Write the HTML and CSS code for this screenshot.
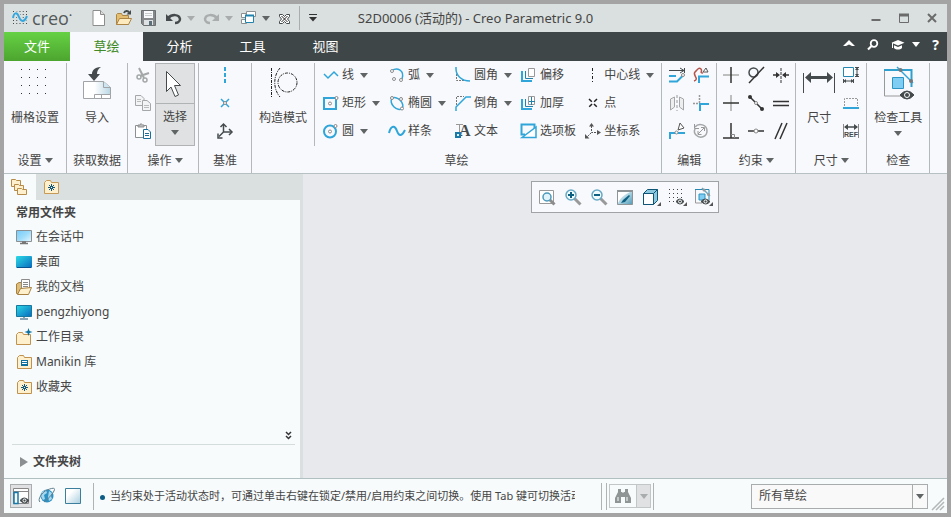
FILE: index.html
```html
<!DOCTYPE html>
<html lang="zh-CN">
<head>
  <meta charset="UTF-8">
  <meta name="viewport" content="width=device-width, initial-scale=1.0">
  <title>S2D0006 (活动的) - Creo Parametric 9.0</title>
  <link rel="stylesheet" href="styles.css">
</head>
<body>
  <div class="window">

    <!-- Title bar -->
    <header class="titlebar">
      <div class="quick">
        <div class="logo">
          <svg width="16" height="16" viewBox="0 0 16 16"><path d="M1 1.500h14M1 4.500h14M1 7.500h14M1 10.500h14M1 13.500h14" stroke="#454b4d" stroke-dasharray="1 2.250" fill="none"/><path d="M1 8C2 2 5 2 7 7s5 6 8-1" stroke="#dae0df" stroke-width="4" fill="none"/><path d="M1 8C2 2 5 2 7 7s5 6 8-1" stroke="#35a7de" stroke-width="2" fill="none"/></svg>
          <span>creo<sup>•</sup></span>
        </div>
        <button class="qbtn" aria-label="新建"><svg width="16" height="18" viewBox="0 0 16 18"><path d="M2 1.500h7.500l4 4v11H2z" fill="#fff" stroke="#8c8c8c"/><path d="M9.500 1.500v4h4" fill="#ddd" stroke="#8c8c8c"/></svg></button>
        <button class="qbtn" aria-label="打开"><svg width="18" height="18" viewBox="0 0 18 18"><path d="M1.500 15.500v-10l1-1h4l1 2h6v9z" fill="#e3bd72" stroke="#ad8443"/><path d="M1.500 15.500l3-6h12l-3 6z" fill="#fdeabf" stroke="#ad8443"/><path d="M9 4c1-2.500 4-2.500 5-.5" stroke="#454b4d" stroke-width="2" fill="none"/><path d="M11.500 5.500h4.500V1z" fill="#454b4d"/></svg></button>
        <button class="qbtn" aria-label="保存"><svg width="16" height="18" viewBox="0 0 16 18"><path d="M.5 1.500h14v15H2.500l-2-2z" fill="#85898b" stroke="#6c7072"/><path d="M3 2h9v7H3z" fill="#f8fafb"/><path d="M4 4.500h7M4 6.500h7" stroke="#c9cccd"/><path d="M3 11h9v5H3z" fill="#dfe2e3"/><path d="M8 12h3v4H8z" fill="#5b6f7b"/></svg></button>
        <button class="qbtn split" aria-label="撤消"><svg width="17" height="16" viewBox="0 0 17 16"><path d="M3 8c4-4 11-4 12 1 0 3-3 4-5 4" stroke="#454b4d" stroke-width="2.500" fill="none"/><path d="M1 4v7h7z" fill="#454b4d"/></svg><i class="caret dim"></i></button>
        <button class="qbtn split" aria-label="重做"><svg width="17" height="16" viewBox="0 0 17 16"><path d="M14 8C10 4 3 4 2 9c0 3 3 4 5 4" stroke="#a9adad" stroke-width="2.500" fill="none"/><path d="M16 4v7H9z" fill="#a9adad"/></svg><i class="caret dim"></i></button>
        <button class="qbtn split" aria-label="窗口"><svg width="16" height="16" viewBox="0 0 16 16"><g fill="#fff" stroke="#8b9091"><path d="M5.500 1.500h9v5h-9zM.5 3.500h5v4h-5zM.5 9.500h5v4h-5z"/></g><path d="M4.500 5.500h8v7h-8z" fill="#fff" stroke="#1f83ad"/><path d="M4 5.500h9" stroke="#1f83ad" stroke-width="2"/></svg><i class="caret"></i></button>
        <button class="qbtn" aria-label="关闭"><svg width="13" height="13" viewBox="0 0 13 13"><path d="M1.500 2.500h3l2 2 2-2h3v2l-2 2.500 2 2.500v2h-3l-2-2-2 2h-3v-2l2-2.500-2-2.500z" fill="#fff" stroke="#454b4d"/><path d="M3.500 4l6 6M9.500 4l-6 6" stroke="#222"/></svg></button>
        <span class="qsep"></span>
        <button class="qbtn more" aria-label="自定义快速访问工具栏"><svg width="10" height="8" viewBox="0 0 10 8"><path d="M1 .5h8" stroke="#333"/><path d="M1 3h8L5 7.500z" fill="#333"/></svg></button>
      </div>
      <h1 class="title">S2D0006 (活动的) - Creo Parametric 9.0</h1>
      <div class="controls">
        <button aria-label="最小化"><svg width="10" height="10" viewBox="0 0 10 10"><path d="M.5 7h9" stroke="#6b6b6b" stroke-width="2"/></svg></button>
        <button aria-label="最大化"><svg width="10" height="10" viewBox="0 0 10 10"><path d="M.5 1v8.500h9V1" stroke="#6b6b6b" fill="none"/><path d="M0 2h10" stroke="#6b6b6b" stroke-width="3"/></svg></button>
        <button aria-label="关闭窗口"><svg width="10" height="10" viewBox="0 0 10 10"><path d="M1 1l8 8M9 1L1 9" stroke="#6b6b6b" stroke-width="2"/></svg></button>
      </div>
    </header>

    <!-- Menu tabs -->
    <nav class="menubar">
      <a class="tab file" href="#">文件</a>
      <a class="tab active" href="#">草绘</a>
      <a class="tab" href="#">分析</a>
      <a class="tab" href="#">工具</a>
      <a class="tab" href="#">视图</a>
      <div class="help">
        <button aria-label="最小化功能区"><svg width="12" height="12" viewBox="0 0 12 12"><path d="M0 7l6-6 6 6H9L6 5.500 3 7z" fill="#fff"/></svg></button>
        <button aria-label="搜索"><svg width="12" height="12" viewBox="0 0 12 12"><circle cx="7" cy="4.500" r="3.300" stroke="#fff" stroke-width="1.800" fill="none"/><path d="M4.500 7L1 10.500" stroke="#fff" stroke-width="2.200"/></svg></button>
        <button class="learn" aria-label="学习"><svg width="14" height="12" viewBox="0 0 14 12"><path d="M7 1l6.500 2.800L7 6.500.5 3.800z" fill="#fff"/><path d="M3 6.200l4 1.700 4-1.700V9c-2 2-6 2-8 0z" fill="#fff"/><path d="M1.500 4v5" stroke="#fff"/></svg><i class="caret white"></i></button>
        <button class="question" aria-label="帮助">?</button>
      </div>
    </nav>

    <!-- Ribbon -->
    <section class="ribbon">
      <div class="group">
        <div class="tools">
          <button class="big"><svg width="32" height="32" viewBox="0 0 32 32"><path d="M2 2.500h26M2 10.500h26M2 18.500h26M2 26.500h26" stroke="#333" stroke-dasharray="1 7" fill="none"/></svg><span>栅格设置</span></button>
        </div>
        <button class="caption">设置<i class="caret"></i></button>
      </div>

      <div class="group narrow">
        <div class="tools">
          <button class="big"><svg width="32" height="32" viewBox="0 0 32 32"><defs><linearGradient id="sheet"><stop offset=".4" stop-color="#fff"/><stop offset="1" stop-color="#b9d7e4"/></linearGradient></defs><path d="M2.500 14.500h20l7 6v11h-27z" fill="url(#sheet)" stroke="#a0a4a6"/><path d="M22.500 14.500v6h7" fill="#cfe5ef" stroke="#a0a4a6"/><path d="M13.500 31.500v-4h16v4zM20.500 27.500v4" fill="#fff" stroke="#a0a4a6"/><path d="M20 0c-7 0-9 4-9 7H7l6 7 6-7h-3c0-3 1-5 4-7z" fill="#454b4d"/></svg><span>导入</span></button>
        </div>
        <div class="caption">获取数据</div>
      </div>

      <div class="group operate">
        <div class="tools">
          <div class="icons one">
            <button aria-label="剪切"><svg width="16" height="16" viewBox="0 0 16 16"><path d="M4 1l5 10M14 6L5 9" stroke="#a3a7a8" stroke-width="2" fill="none"/><circle cx="4" cy="10" r="2" fill="none" stroke="#a3a7a8" stroke-width="1.500"/><circle cx="10" cy="13" r="2" fill="none" stroke="#a3a7a8" stroke-width="1.500"/></svg></button>
            <button aria-label="复制"><svg width="16" height="16" viewBox="0 0 16 16"><g fill="#f3f4f5" stroke="#a3a7a8"><path d="M.5.500H6l3 3v7H.5z"/><path d="M2 4.500h4M2 6.500h4" stroke="#bbb"/><path d="M7.500 5.500H12l3.500 3v7h-8z"/><path d="M9 10.500h5M9 12.500h5" stroke="#bbb"/></g></svg></button>
            <button aria-label="粘贴"><svg width="16" height="16" viewBox="0 0 16 16"><path d="M.5 2.500h11v12H.5z" fill="#fff" stroke="#8c9091"/><path d="M3 4V2h2l1-1.500L7.500 2H9v2z" fill="#bbb" stroke="#8c9091"/><path d="M8.500 6.500H13l2.500 2.500v6.500h-7z" fill="#fff" stroke="#1a6f98"/><path d="M10 10.500h4M10 12.500h4" stroke="#1a6f98"/></svg></button>
          </div>
          <button class="select">
            <span class="pointer"><svg width="18" height="28" viewBox="0 0 18 28"><path d="M.5 1.500v20L5 17l4 9.500 3.500-1.500-4-9.500h6z" fill="#fff" stroke="#454b4d"/></svg></span>
            <span class="name">选择<i class="caret"></i></span>
          </button>
        </div>
        <button class="caption">操作<i class="caret"></i></button>
      </div>

      <div class="group datum">
        <div class="tools">
          <div class="icons one">
            <button aria-label="中心线"><svg width="16" height="16" viewBox="0 0 16 16"><path d="M8 0v16" stroke="#2fa5d9" stroke-width="2" stroke-dasharray="4 2"/></svg></button>
            <button aria-label="点"><svg width="16" height="16" viewBox="0 0 16 16"><path d="M4 4l8 8M12 4l-8 8" stroke="#2fa5d9" stroke-width="1.500"/><circle cx="8" cy="8" r="1.500" fill="#fff" stroke="#888"/></svg></button>
            <button aria-label="坐标系"><svg width="16" height="16" viewBox="0 0 16 16"><path d="M6.500 2v7H14M6.500 9L2 13.500" stroke="#454b4d" stroke-width="1.500" fill="none"/><path d="M3.500 4l3-3 3 3M12 6l3 3-3 3M1 10.500V15h4.500" fill="none" stroke="#454b4d" stroke-width="1.500"/></svg></button>
          </div>
        </div>
        <div class="caption">基准</div>
      </div>

      <div class="group">
        <div class="tools">
          <div class="construct">
            <button class="big"><svg width="32" height="32" viewBox="0 0 32 32"><g stroke="#222" fill="none" stroke-dasharray="3 1 1 1"><path d="M4.500 1v29"/><path d="M13 1c-7 8-7 21 0 29"/><circle cx="20.500" cy="15.500" r="9.500"/></g></svg><span>构造模式</span></button>
          </div>
          <div class="shapes">
            <button class="tool"><svg width="16" height="16" viewBox="0 0 16 16"><path d="M1 7l4 4 6-6 4 4" stroke="#2fa5d9" stroke-width="1.500" fill="none"/></svg>线<i class="caret"></i></button>
            <button class="tool"><svg width="16" height="16" viewBox="0 0 16 16"><path d="M3 3.500C8 0 16 3 13 12" stroke="#2fa5d9" stroke-width="1.500" fill="none"/><g fill="#fff" stroke="#8c9091"><circle cx="3" cy="4" r="1.500"/><circle cx="12" cy="13" r="1.500"/><circle cx="5" cy="12" r="1.500"/></g></svg>弧<i class="caret"></i></button>
            <button class="tool"><svg width="16" height="16" viewBox="0 0 16 16"><path d="M1.500 7v6.500H9" stroke="#777" stroke-dasharray="2 1" fill="none"/><path d="M1 0v2c0 6 5 12 14 12" stroke="#2fa5d9" stroke-width="1.500" fill="none"/></svg>圆角<i class="caret"></i></button>
            <button class="tool"><svg width="16" height="16" viewBox="0 0 16 16"><path d="M7.500 1.500h6v8h-6z" stroke="#999" fill="#fff"/><path d="M4.500 4v7.500H12" stroke="#1f83ad" fill="none"/><path d="M1 4v10h10" stroke="#2fa5d9" stroke-width="2" fill="none"/></svg>偏移</button>
            <button class="tool"><svg width="16" height="16" viewBox="0 0 16 16"><path d="M7.500 1v15" stroke="#222" stroke-dasharray="3 2 1 2"/></svg>中心线<i class="caret"></i></button>

            <button class="tool"><svg width="16" height="16" viewBox="0 0 16 16"><path d="M1 3h12v11H1z" stroke="#2fa5d9" stroke-width="2" fill="none"/><circle cx="7" cy="8.500" r="1.500" fill="#fff" stroke="#888"/><circle cx="13.500" cy="3" r="1.500" fill="#fff" stroke="#888"/></svg>矩形<i class="caret"></i></button>
            <button class="tool"><svg width="16" height="16" viewBox="0 0 16 16"><ellipse cx="8" cy="8.500" rx="7" ry="4.500" transform="rotate(45 8 8.500)" stroke="#2fa5d9" stroke-width="1.500" fill="none"/><g fill="#fff" stroke="#888"><circle cx="3" cy="3" r="1.500"/><circle cx="12" cy="4" r="1.500"/><circle cx="13" cy="13.500" r="1.500"/></g></svg>椭圆<i class="caret"></i></button>
            <button class="tool"><svg width="16" height="16" viewBox="0 0 16 16"><path d="M1.500 10V1.500H9" stroke="#777" stroke-dasharray="2 1" fill="none"/><path d="M1 16v-4L11 2h5" stroke="#2fa5d9" stroke-width="1.500" fill="none"/></svg>倒角<i class="caret"></i></button>
            <button class="tool"><svg width="16" height="16" viewBox="0 0 16 16"><path d="M7.500 1.500h6v8h-6z" stroke="#999" fill="#fff"/><path d="M4.500 4v7.500H12M8 6.500h6M10.500 2v8" stroke="#1f83ad" fill="none"/><path d="M1 4v10h10" stroke="#2fa5d9" stroke-width="2" fill="none"/></svg>加厚</button>
            <button class="tool"><svg width="16" height="16" viewBox="0 0 16 16"><path d="M4 4l8 8M12 4l-8 8" stroke="#222" stroke-width="1.500" stroke-dasharray="4 3"/></svg>点</button>

            <button class="tool"><svg width="16" height="16" viewBox="0 0 16 16"><circle cx="7" cy="8.500" r="6" stroke="#2fa5d9" stroke-width="2" fill="none"/><circle cx="7" cy="8.500" r="1.500" fill="#fff" stroke="#888"/><circle cx="12.500" cy="3" r="1.500" fill="#fff" stroke="#888"/></svg>圆<i class="caret"></i></button>
            <button class="tool"><svg width="16" height="16" viewBox="0 0 16 16"><path d="M0 10C2 2 6 2 8 8s5 5 8-1" stroke="#2fa5d9" stroke-width="2" fill="none"/></svg>样条</button>
            <button class="tool"><svg width="16" height="16" viewBox="0 0 16 16"><path d="M1 1.500h7M4.500 2v8" stroke="#999"/><text x="4" y="13" class="glyph">A</text><path d="M1 10h4v4H1z" fill="#dff2fb" stroke="#1a79a6" stroke-width="2"/></svg>文本</button>
            <button class="tool"><svg width="16" height="16" viewBox="0 0 16 16"><path d="M4 11.500H.5v-10h13v4" stroke="#2fa5d9" stroke-width="2" fill="none"/><path d="M1 14.500L15 4v10.500z" stroke="#2fa5d9" stroke-width="1.500" fill="#fff"/></svg>选项板</button>
            <button class="tool"><svg width="16" height="16" viewBox="0 0 16 16"><path d="M6.500 3v6.500H13M6 10l-4 4" stroke="#555" stroke-dasharray="2 1" fill="none"/><path d="M4 3.500L6.500 0 9 3.500zM12 7l4 2.500-4 2.500zM0 11v4.500h4.500z" fill="#555"/></svg>坐标系</button>
          </div>
        </div>
        <div class="caption">草绘</div>
      </div>

      <div class="group">
        <div class="tools">
          <div class="icons two">
            <button aria-label="修改"><svg width="16" height="16" viewBox="0 0 16 16"><path d="M0 3.500h15M11 1l4 2.500L11 6M15.500 1v5" stroke="#454b4d" fill="none"/><path d="M0 9h7M0 14.500h8l6-6" stroke="#2fa5d9" stroke-width="2" fill="none"/><circle cx="14" cy="8" r="1.500" fill="#fff" stroke="#888"/></svg></button>
            <button aria-label="删除段"><svg width="16" height="16" viewBox="0 0 16 16"><path d="M1 14c6-2-2-6 1-9s4-5 6-3-2 4 2 4" stroke="#b4544b" stroke-width="1.500" fill="none"/><path d="M10 5l3-4 2 4z" fill="#fff" stroke="#555"/><path d="M6 16V9.500h10" stroke="#2fa5d9" stroke-width="2" fill="none"/></svg></button>
            <button aria-label="镜像"><svg width="16" height="16" viewBox="0 0 16 16"><path d="M1.500 4l4-2v10l-4 3zM14.500 4l-4-2v10l4 3z" fill="#eee" stroke="#a3a7a8"/><path d="M8 0v16" stroke="#999" stroke-dasharray="3 2"/></svg></button>
            <button aria-label="拐角"><svg width="16" height="16" viewBox="0 0 16 16"><path d="M6.500 0v8M0 8.500h6" stroke="#999" stroke-width="1.500" stroke-dasharray="2 1"/><path d="M7 16V9h9" stroke="#2fa5d9" stroke-width="2" fill="none"/></svg></button>
            <button aria-label="分割"><svg width="16" height="16" viewBox="0 0 16 16"><path d="M1 16v-6h15" stroke="#2fa5d9" stroke-width="2" fill="none"/><path d="M9 7l2-7 4 5z" fill="#fff" stroke="#555"/><circle cx="7.500" cy="9.500" r="1.500" fill="#fff" stroke="#888"/></svg></button>
            <button aria-label="旋转调整大小"><svg width="16" height="16" viewBox="0 0 16 16"><path d="M2 4c4-5 12-2 12 4s-7 8-11 4c-2-2-2-4-1-6" stroke="#a3a7a8" stroke-width="1.500" fill="none"/><path d="M1.500 1v4.500H6M5 11l6-6M8 4.500h3.500V8M5 8v3.500h3.500" stroke="#999" fill="none"/></svg></button>
          </div>
        </div>
        <div class="caption">编辑</div>
      </div>

      <div class="group narrow">
        <div class="tools">
          <div class="icons three">
            <button aria-label="竖直"><svg width="16" height="16" viewBox="0 0 16 16"><path d="M0 8h16" stroke="#aaa" stroke-width="1.500"/><path d="M8 0v16" stroke="#333" stroke-width="1.500"/></svg></button>
            <button aria-label="相切"><svg width="16" height="16" viewBox="0 0 16 16"><circle cx="5.500" cy="5.500" r="4.500" fill="none" stroke="#454b4d" stroke-width="1.500"/><path d="M1 16L16 0" stroke="#333" stroke-width="1.500"/></svg></button>
            <button aria-label="对称"><svg width="16" height="16" viewBox="0 0 16 16"><path d="M8 1v15" stroke="#333" stroke-dasharray="3 1"/><path d="M0 8h5M16 8h-5" stroke="#333" stroke-width="1.500"/><path d="M3 5l4 3-4 3zM13 5L9 8l4 3z" fill="#333"/></svg></button>
            <button aria-label="水平"><svg width="16" height="16" viewBox="0 0 16 16"><path d="M8 0v16" stroke="#aaa" stroke-width="1.500"/><path d="M0 8h16" stroke="#333" stroke-width="1.500"/></svg></button>
            <button aria-label="中点"><svg width="16" height="16" viewBox="0 0 16 16"><path d="M2 2l12 12" stroke="#333" stroke-width="1.500"/><circle cx="2" cy="2" r="2" fill="#333"/><circle cx="14" cy="14" r="2" fill="#333"/><circle cx="8" cy="8" r="1.500" fill="#fff" stroke="#888"/></svg></button>
            <button aria-label="相等"><svg width="16" height="16" viewBox="0 0 16 16"><path d="M0 6.500h16M0 10.500h16" stroke="#333" stroke-width="1.500"/></svg></button>
            <button aria-label="垂直"><svg width="16" height="16" viewBox="0 0 16 16"><path d="M8 0v15M0 15h16" stroke="#333" stroke-width="1.500"/><path d="M8 11.500h3.500V15" stroke="#888" fill="none"/></svg></button>
            <button aria-label="重合"><svg width="16" height="16" viewBox="0 0 16 16"><path d="M0 8h16" stroke="#333" stroke-width="1.500"/><circle cx="8" cy="8" r="2" fill="#fff" stroke="#888"/></svg></button>
            <button aria-label="平行"><svg width="16" height="16" viewBox="0 0 16 16"><path d="M2 16L9 0M7 16l7-16" stroke="#333" stroke-width="1.500"/></svg></button>
          </div>
        </div>
        <button class="caption">约束<i class="caret"></i></button>
      </div>

      <div class="group">
        <div class="tools spaced">
          <button class="big"><svg width="32" height="32" viewBox="0 0 32 32"><path d="M.5 6v20M31.500 6v20" stroke="#454b4d"/><path d="M5 10.500h22" stroke="#454b4d" stroke-width="3"/><path d="M2 10.500L8 5v11zM30 10.500L24 5v11z" fill="#454b4d"/></svg><span>尺寸</span></button>
          <div class="icons one">
            <button aria-label="周长"><svg width="16" height="16" viewBox="0 0 16 16"><path d="M.5.500h10v9H.5z" fill="#fff" stroke="#2387b2"/><path d="M12 .5h4M12 9.500h4M14 1v8M.5 12v4M10.500 12v4M1 14h9" stroke="#454b4d"/><path d="M12 3l2-2.500L16 3zM12 7l2 2.500L16 7zM3 12L.5 14 3 16zM8 12l2.500 2L8 16z" fill="#454b4d"/></svg></button>
            <button aria-label="基线"><svg width="16" height="16" viewBox="0 0 16 16"><path d="M1.500 11V3.500h13V11" stroke="#999" stroke-dasharray="2 1" fill="none"/><path d="M0 13h16" stroke="#2fa5d9" stroke-width="2"/></svg></button>
            <button aria-label="参考"><svg width="16" height="16" viewBox="0 0 16 16"><path d="M.5 1v14M15.500 1v14" stroke="#888"/><path d="M2 4h12" stroke="#454b4d" stroke-width="1.500"/><path d="M1 4l4-3v6zM15 4l-4-3v6z" fill="#454b4d"/><text x="8" y="14" class="ref">REF</text></svg></button>
          </div>
        </div>
        <button class="caption">尺寸<i class="caret"></i></button>
      </div>

      <div class="group">
        <div class="tools">
          <button class="big"><svg width="32" height="32" viewBox="0 0 32 32"><path d="M2.500 2v27H20" stroke="#999" fill="none"/><path d="M2 3h27.500V20" stroke="#2f9fce" stroke-width="2" fill="none"/><path d="M10.500 10.500h11v11h-11z" fill="#7fcdf2" stroke="#2d95c4"/><path d="M15 0l16 16" stroke="#2fa5d9" stroke-width="1.500"/><circle cx="18.500" cy="3" r="2" fill="#777"/><circle cx="29" cy="14" r="2" fill="#777"/><path d="M18 28q7-8 14 0-7 8-14 0z" fill="#454b4d" stroke="#454b4d"/><circle cx="25" cy="28" r="2.500" fill="#454b4d" stroke="#fff"/></svg><span>检查工具</span><i class="caret"></i></button>
        </div>
        <div class="caption">检查</div>
      </div>
    </section>

    <!-- Navigator and graphics area -->
    <main class="workspace">
      <aside class="navigator">
        <div class="nav-tabs">
          <button class="active" aria-label="文件夹浏览器"><svg width="18" height="18" viewBox="0 0 18 18"><g fill="#fff0cd" stroke="#b68c48"><path d="M.5 1.500h4l1 1h4v6h-9z"/><path d="M3.500 6.500h4l1 1h4v5h-9z"/><path d="M6.500 10.500h4l1 1h4v5h-9z"/></g></svg></button>
          <button aria-label="收藏夹"><svg width="16" height="16" viewBox="0 0 16 16"><path d="M.5 3.500l2-2h4l1 2h7v11H.5z" fill="#fff0cd" stroke="#c79b57"/><path d="M7.500 5v7M4 8.500h7M5 6l5 5M10 6l-5 5" stroke="#12597d"/><path d="M7 8h1v1H7z" fill="#fff"/></svg></button>
        </div>
        <h2>常用文件夹</h2>
        <ul class="folders">
          <li><a href="#"><svg width="16" height="16" viewBox="0 0 16 16"><defs><linearGradient id="sky" x2="1" y2="1"><stop stop-color="#72cdfa"/><stop offset=".5" stop-color="#9ddcfa"/><stop offset="1" stop-color="#e5f7fe"/></linearGradient><linearGradient id="sea" x2="1" y2="1"><stop stop-color="#2adbe6"/><stop offset="1" stop-color="#0869bd"/></linearGradient></defs><path d="M.5 1.500h15v11H.5z" fill="url(#sky)" stroke="#8b8f91"/><path d="M6 13h4M4 14.500h8" stroke="#777" stroke-width="1.500"/></svg>在会话中</a></li>
          <li><a href="#"><svg width="16" height="16" viewBox="0 0 16 16"><rect y="2" width="16" height="12" rx="1" fill="url(#sea)"/><path d="M1 13.500h14" stroke="#07528f"/></svg>桌面</a></li>
          <li><a href="#"><svg width="16" height="16" viewBox="0 0 16 16"><path d="M.5 14.500V5L3 3.500h5v11z" fill="#dfbd7b" stroke="#a8813f"/><path d="M5.500.500h8v10h-8z" fill="#fff" stroke="#8c8c8c"/><path d="M7 3.500h5M7 5.500h5M7 7.500h5" stroke="#888"/><path d="M1.500 15.500l3-6 11-1-3 7z" fill="#fff0cd" stroke="#a8813f"/></svg>我的文档</a></li>
          <li><a href="#"><svg width="16" height="16" viewBox="0 0 16 16"><path d="M.5 1.500h15v11H.5z" fill="url(#sea)" stroke="#17779c"/><path d="M8 13v2M4 15h8" stroke="#8aa4b5" stroke-width="2"/></svg>pengzhiyong</a></li>
          <li><a href="#"><svg width="16" height="16" viewBox="0 0 16 16"><path d="M.5 5.500l2-2h4l1 2h7v10H.5z" fill="#fff0cd" stroke="#c0924d"/><path d="M12.500-1l1 3 3 1-3 1-1 3-1-3-3-1 3-1z" fill="#0c719e"/></svg>工作目录</a></li>
          <li><a href="#"><svg width="16" height="16" viewBox="0 0 16 16"><path d="M1.500 3.500l2-2h4l1 2h7v11h-14z" fill="#fff0cd" stroke="#c0924d"/><path d="M5 6h7v6H5z" fill="#0c719e"/><path d="M6 7.500h5M6 9.500h5" stroke="#fff"/></svg>Manikin 库</a></li>
          <li><a href="#"><svg width="16" height="16" viewBox="0 0 16 16"><path d="M1.500 3.500l2-2h4l1 2h7v11h-14z" fill="#fff0cd" stroke="#c0924d"/><path d="M8.500 5v7M5 8.500h7M6 6l5 5M11 6l-5 5" stroke="#12597d"/><path d="M8 8h1v1H8z" fill="#fff"/></svg>收藏夹</a></li>
        </ul>
        <button class="expand" aria-label="更多"><svg width="7" height="9" viewBox="0 0 7 9"><path d="M1 1l2.500 2.500L6 1M1 5l2.500 2.500L6 5" stroke="#333" stroke-width="1.500" fill="none"/></svg></button>
        <button class="tree"><svg width="8" height="10" viewBox="0 0 8 10"><path d="M0 0l8 5-8 5z" fill="#8b8f91"/></svg>文件夹树</button>
      </aside>

      <div class="canvas">
        <div class="view-tools">
          <button aria-label="重新调整"><svg width="17" height="17" viewBox="0 0 17 17"><path d="M.5 1.500h14v13H.5z" fill="#fff" stroke="#999"/><path d="M10.500 10.500l5 5" stroke="#8c8c8c" stroke-width="3"/><circle cx="8" cy="8" r="4" fill="#e2f4fb" stroke="#4b9abb" stroke-width="1.500"/></svg></button>
          <button aria-label="放大"><svg width="17" height="17" viewBox="0 0 17 17"><path d="M9.500 9.500l6 6" stroke="#999" stroke-width="3"/><circle cx="6" cy="6" r="5" fill="#f1fafd" stroke="#67a9c5" stroke-width="1.500"/><path d="M3 6h6M6 3v6" stroke="#0e6083" stroke-width="2"/></svg></button>
          <button aria-label="缩小"><svg width="17" height="17" viewBox="0 0 17 17"><path d="M9.500 9.500l6 6" stroke="#999" stroke-width="3"/><circle cx="6" cy="6" r="5" fill="#f1fafd" stroke="#67a9c5" stroke-width="1.500"/><path d="M3 6h6" stroke="#0e6083" stroke-width="2"/></svg></button>
          <button aria-label="重画"><svg width="17" height="17" viewBox="0 0 17 17"><defs><linearGradient id="paint" x2="1" y2="1"><stop offset=".3" stop-color="#d5eaf1"/><stop offset="1" stop-color="#4e9bb8"/></linearGradient></defs><path d="M.5 1.500h15v14H.5z" fill="url(#paint)" stroke="#8f9597"/><path d="M1 14Q4 7 13 3H1z" fill="#fff"/><path d="M0 2h16" stroke="#8f9597" stroke-width="2"/><path d="M4 14l2-3 6-5 1 1-5 6z" fill="#0e6083"/></svg></button>
          <button aria-label="显示样式"><svg width="19" height="18" viewBox="0 0 19 18"><path d="M1.500 5.500l4-4h10v11l-4 4h-10z" fill="#8cc9df" stroke="#0e5476"/><path d="M1.500 5.500h10v11h-10z" fill="#fff" stroke="#0e5476"/><path d="M11.500 5.500l4-4" stroke="#0e5476"/><path d="M19 14v4h-4z" fill="#555"/></svg></button>
          <button aria-label="栅格显示"><svg width="19" height="18" viewBox="0 0 19 18"><path d="M1 1.500h14M1 5.500h14M1 9.500h14M1 13.500h7" stroke="#444" stroke-dasharray="1 3"/><path d="M8 13.500q4-5 8 0-4 5-8 0z" fill="#454b4d" stroke="#454b4d"/><circle cx="12" cy="13.500" r="1.500" fill="#454b4d" stroke="#fff"/><path d="M19 14v4h-4z" fill="#555"/></svg></button>
          <button aria-label="草绘器显示过滤器"><svg width="19" height="18" viewBox="0 0 19 18"><path d="M1.500 2v13H8" stroke="#999" fill="none"/><path d="M1 1.500h14V12" stroke="#2387b2" fill="none"/><path d="M5 6h6v6H5z" fill="#7fcdf2" stroke="#2d95c4"/><path d="M8 0l8 8" stroke="#6fa5b9" stroke-width="1.500"/><circle cx="10" cy="2" r="1.500" fill="#999"/><circle cx="14.500" cy="6.500" r="1.500" fill="#999"/><path d="M7 13.500q4-5 9 0-4 5-9 0z" fill="#454b4d" stroke="#454b4d"/><circle cx="11.500" cy="13.500" r="1.500" fill="#454b4d" stroke="#fff"/><path d="M19 14v4h-4z" fill="#555"/></svg></button>
        </div>
      </div>
    </main>

    <!-- Status bar -->
    <footer class="statusbar">
      <button class="sbtn pressed" aria-label="导航器"><svg width="16" height="18" viewBox="0 0 16 18"><path d="M.5 1.500h15v15H.5z" fill="#fff" stroke="#888"/><path d="M0 4.500h16" stroke="#888"/><path d="M1 5.500h4v11H1z" fill="#fff" stroke="#1a79a6" stroke-width="1.500"/><path d="M7 13.500q4-5 9 0-4 5-9 0z" fill="#454b4d" stroke="#454b4d"/><circle cx="11.500" cy="13.500" r="1.500" fill="#454b4d" stroke="#fff"/></svg></button>
      <button class="sbtn" aria-label="浏览器"><svg width="18" height="18" viewBox="0 0 18 18"><circle cx="9" cy="9" r="6.500" fill="#2d91c4"/><path d="M4 5l4-2 1 3-3 2 1 4-2 1-2-4zM11 4l3 2-1 3 1 3-3 2-1-4z" fill="#a5d8ee"/><path d="M2 15C-1 13 4 5 9 3s9-3 7 1-6 8-10 11" fill="none" stroke="#607f8f" stroke-width="1"/></svg></button>
      <button class="sbtn" aria-label="全屏"><svg width="16" height="16" viewBox="0 0 16 16"><defs><linearGradient id="pane" x2="1" y2="1"><stop offset=".3" stop-color="#fff"/><stop offset="1" stop-color="#a9cfdf"/></linearGradient></defs><path d="M.5.500h15v15H.5z" fill="url(#pane)" stroke="#3c7f9d"/></svg></button>
      <span class="ssep"></span>
      <p class="message"><i class="dot"></i>当约束处于活动状态时，可通过单击右键在锁定/禁用/启用约束之间切换。使用 Tab 键可切换活动</p>
      <span class="ssep"></span>
      <div class="search">
        <span class="ssep"></span>
        <button class="find" aria-label="查找"><span class="find-icon"><svg width="16" height="16" viewBox="0 0 16 16"><path d="M3 1h3v3h1l1 1 1-1h1V1h3v3l3 6v5h-6V9H6v6H0v-5l3-6z" fill="#8f9495"/><path d="M2 9h2v4H2zM11 9h2v4h-2z" fill="#c5c8c9"/></svg></span><span class="find-drop"><i class="caret dim"></i></span></button>
        <span class="ssep"></span>
      </div>
      <div class="filter">
        <select aria-label="选择过滤器"><option>所有草绘</option></select>
        <span class="drop"><i class="caret"></i></span>
      </div>
      <svg class="grip" width="12" height="12" viewBox="0 0 12 12"><path d="M0 12L12 0M4 12l8-8M8 12l4-4" stroke="#b3b7b7" stroke-width="1.500"/></svg>
    </footer>

  </div>
</body>
</html>
```
FILE: styles.css
```css
* {
  box-sizing: border-box;
}

body {
  margin: 0;
  font-family: "Noto Sans", "Noto Sans CJK SC", sans-serif;
  font-size: 12px;
  line-height: 20px;
  color: #454545;
}

button {
  display: flex;
  align-items: center;
  justify-content: center;
  margin: 0;
  padding: 0;
  border: none;
  background: none;
  font: inherit;
  color: inherit;
  white-space: nowrap;
}

a {
  color: inherit;
  text-decoration: none;
}

svg {
  display: block;
  flex: none;
  overflow: visible;
}

.window {
  display: flex;
  flex-direction: column;
  height: 100vh;
  border: 4px solid #a3a4a3;
  background-color: #f8f9fc;
  overflow: hidden;
}

.caret {
  flex: none;
  border: 4px solid transparent;
  border-top: 5px solid #606465;
  border-bottom: none;
}

.caret.dim {
  border-top-color: #a8acac;
}

.caret.white {
  border-top-color: #ffffff;
}

/* Title bar */
.titlebar {
  display: grid;
  grid-template-columns: 1fr auto 1fr;
  align-items: center;
  height: 28px;
  flex: none;
  background-color: #dae0df;
}

.quick {
  display: flex;
  align-items: center;
  gap: 8px;
  padding-left: 8px;
}

.logo {
  display: flex;
  align-items: center;
  gap: 4px;
  width: 71px;
  font-family: "Open Sans", sans-serif;
  font-size: 18px;
  font-weight: 500;
  color: #54595a;
}

.logo sup {
  font-size: 8px;
  line-height: 8px;
}

.split {
  gap: 5px;
}

.qsep {
  width: 1px;
  height: 24px;
  background-color: #a9adad;
}

.title {
  margin: 0;
  font-size: 13px;
  font-weight: normal;
}

.controls {
  display: flex;
  justify-content: flex-end;
  gap: 18px;
  padding-right: 10px;
}

/* Menu tabs */
.menubar {
  display: flex;
  height: 29px;
  flex: none;
  background-color: #3e4647;
}

.tab {
  min-width: 73px;
  font-size: 13px;
  line-height: 29px;
  text-align: center;
  color: #ffffff;
}

.tab.file {
  min-width: 66px;
  background: linear-gradient(#66d144, #4ca52f);
}

.tab.active {
  background-color: #f8f9fc;
  color: #3e8a24;
}

.help {
  display: flex;
  align-items: center;
  gap: 12px;
  margin-left: auto;
  padding: 0 8px 4px 0;
}

.learn {
  gap: 7px;
}

.question {
  font-size: 14px;
  font-weight: bold;
  color: #ffffff;
}

/* Ribbon */
.ribbon {
  display: flex;
  flex: none;
  padding-top: 2px;
  border-bottom: 1px solid #b5c1c2;
}

.group {
  display: flex;
  flex-direction: column;
  padding: 0 7px;
  border-right: 1px solid #b5b8ba;
}

.group.narrow {
  padding: 0 6px;
}

.group.operate {
  padding-right: 3px;
}

.group.datum {
  padding: 0 14px;
}

.tools {
  display: flex;
  justify-content: center;
  gap: 4px;
  height: 83px;
}

.tools.spaced {
  gap: 8px;
}

.caption {
  display: flex;
  align-items: center;
  justify-content: center;
  gap: 3px;
  height: 27px;
  padding-top: 2px;
  white-space: nowrap;
}

.big {
  flex-direction: column;
  justify-content: flex-start;
  padding-top: 4px;
}

.big span {
  margin-top: 9px;
}

.big .caret {
  margin-top: 3px;
}

.icons {
  display: grid;
  grid-auto-rows: 24px;
  gap: 4px 8px;
}

.icons.two {
  grid-template-columns: 16px 16px;
}

.icons.three {
  grid-template-columns: 16px 16px 16px;
  column-gap: 9px;
}

.select {
  flex-direction: column;
  width: 40px;
  border: 1px solid #b0b3b4;
  background-color: #dfe1e2;
}

.pointer,
.select .name {
  display: flex;
  flex-direction: column;
  align-items: center;
  justify-content: center;
  width: 100%;
  height: 39px;
}

.select .name {
  justify-content: flex-start;
  gap: 3px;
  height: 42px;
  padding-top: 3px;
  border-top: 1px solid #b0b3b4;
}

.construct {
  padding-right: 7px;
  border-right: 1px solid #b5b8ba;
}

.shapes {
  display: grid;
  grid-template-columns: repeat(5, auto);
  grid-auto-rows: 24px;
  gap: 4px 9px;
  padding-left: 4px;
}

.tool {
  justify-content: flex-start;
  gap: 3px;
}

.tool .caret {
  margin-left: 3px;
}

.glyph {
  font-family: "Liberation Serif", serif;
  font-size: 16px;
  font-weight: bold;
  fill: #454b4d;
}

.ref {
  font-family: "Liberation Sans", sans-serif;
  font-size: 7px;
  font-weight: bold;
  text-anchor: middle;
  fill: #454b4d;
}

/* Navigator */
.workspace {
  display: flex;
  flex: 1;
  min-height: 0;
}

.navigator {
  display: flex;
  flex-direction: column;
  width: 299px;
  flex: none;
  border-right: 3px solid #dae0df;
  background-color: #f7fbfc;
}

.nav-tabs {
  display: flex;
  height: 26px;
  background-color: #dae0df;
}

.nav-tabs button {
  width: 32px;
}

.nav-tabs .active {
  background-color: #f7fbfc;
}

.navigator h2 {
  margin: 0;
  padding: 2px 12px 0;
  font-size: 12px;
  line-height: 22px;
}

.folders {
  margin: 0;
  padding: 0 12px;
  list-style: none;
}

.folders a {
  display: flex;
  align-items: center;
  gap: 4px;
  height: 25px;
}

.expand {
  align-self: flex-end;
  margin-top: auto;
  padding: 0 8px 4px;
}

.tree {
  justify-content: flex-start;
  gap: 5px;
  height: 34px;
  margin: 0 5px 0 8px;
  padding-left: 8px;
  border-top: 1px solid #d5dcdc;
  font-weight: bold;
}

/* Graphics area */
.canvas {
  flex: 1;
  padding-top: 7px;
  background-color: #e8e9ed;
}

.view-tools {
  display: flex;
  width: max-content;
  height: 32px;
  margin: 0 auto;
  padding: 0 2px;
  border: 1px solid #a0a3a5;
  background-color: #f8f9fc;
}

.view-tools button {
  width: 26px;
}

/* Status bar */
.statusbar {
  display: flex;
  align-items: center;
  gap: 4px;
  height: 35px;
  flex: none;
  padding: 0 3px 0 6px;
  border-top: 1px solid #b0c0c1;
  background-color: #f7fbfc;
}

.sbtn {
  width: 22px;
  height: 24px;
}

.sbtn.pressed {
  border: 1px solid #a9adaf;
  background-color: #dfe1e2;
}

.ssep {
  width: 1px;
  height: 27px;
  background-color: #b0b3b4;
}

.sbtn + .ssep {
  margin-left: 5px;
}

.message {
  flex: 1;
  min-width: 0;
  margin: 0 22px 0 2px;
  overflow: hidden;
  white-space: nowrap;
  font-size: 11px;
}

.dot {
  display: inline-block;
  width: 5px;
  height: 5px;
  margin-right: 5px;
  border-radius: 50%;
  background-color: #0d5c86;
  vertical-align: middle;
}

.search {
  display: flex;
  align-items: center;
  gap: 2px;
}

.find {
  height: 24px;
  border: 1px solid #c3c6c7;
}

.find-icon,
.find-drop {
  display: flex;
  align-items: center;
  justify-content: center;
  width: 26px;
  height: 22px;
}

.find-drop {
  width: 14px;
  background-color: #dfe1e2;
  border-left: 1px solid #c3c6c7;
}

.filter {
  position: relative;
  width: 177px;
  margin-left: 93px;
}

.filter select {
  display: block;
  width: 100%;
  height: 25px;
  padding: 0 20px 0 7px;
  appearance: none;
  border: 1px solid #a9acad;
  border-radius: 0;
  background-color: #f9f9f9;
  font: inherit;
  color: inherit;
}

.drop {
  position: absolute;
  top: 0;
  right: 0;
  display: flex;
  align-items: center;
  justify-content: center;
  width: 16px;
  height: 25px;
  border: 1px solid #a9acad;
  pointer-events: none;
}

.grip {
  align-self: flex-end;
  margin-bottom: 3px;
}
```
